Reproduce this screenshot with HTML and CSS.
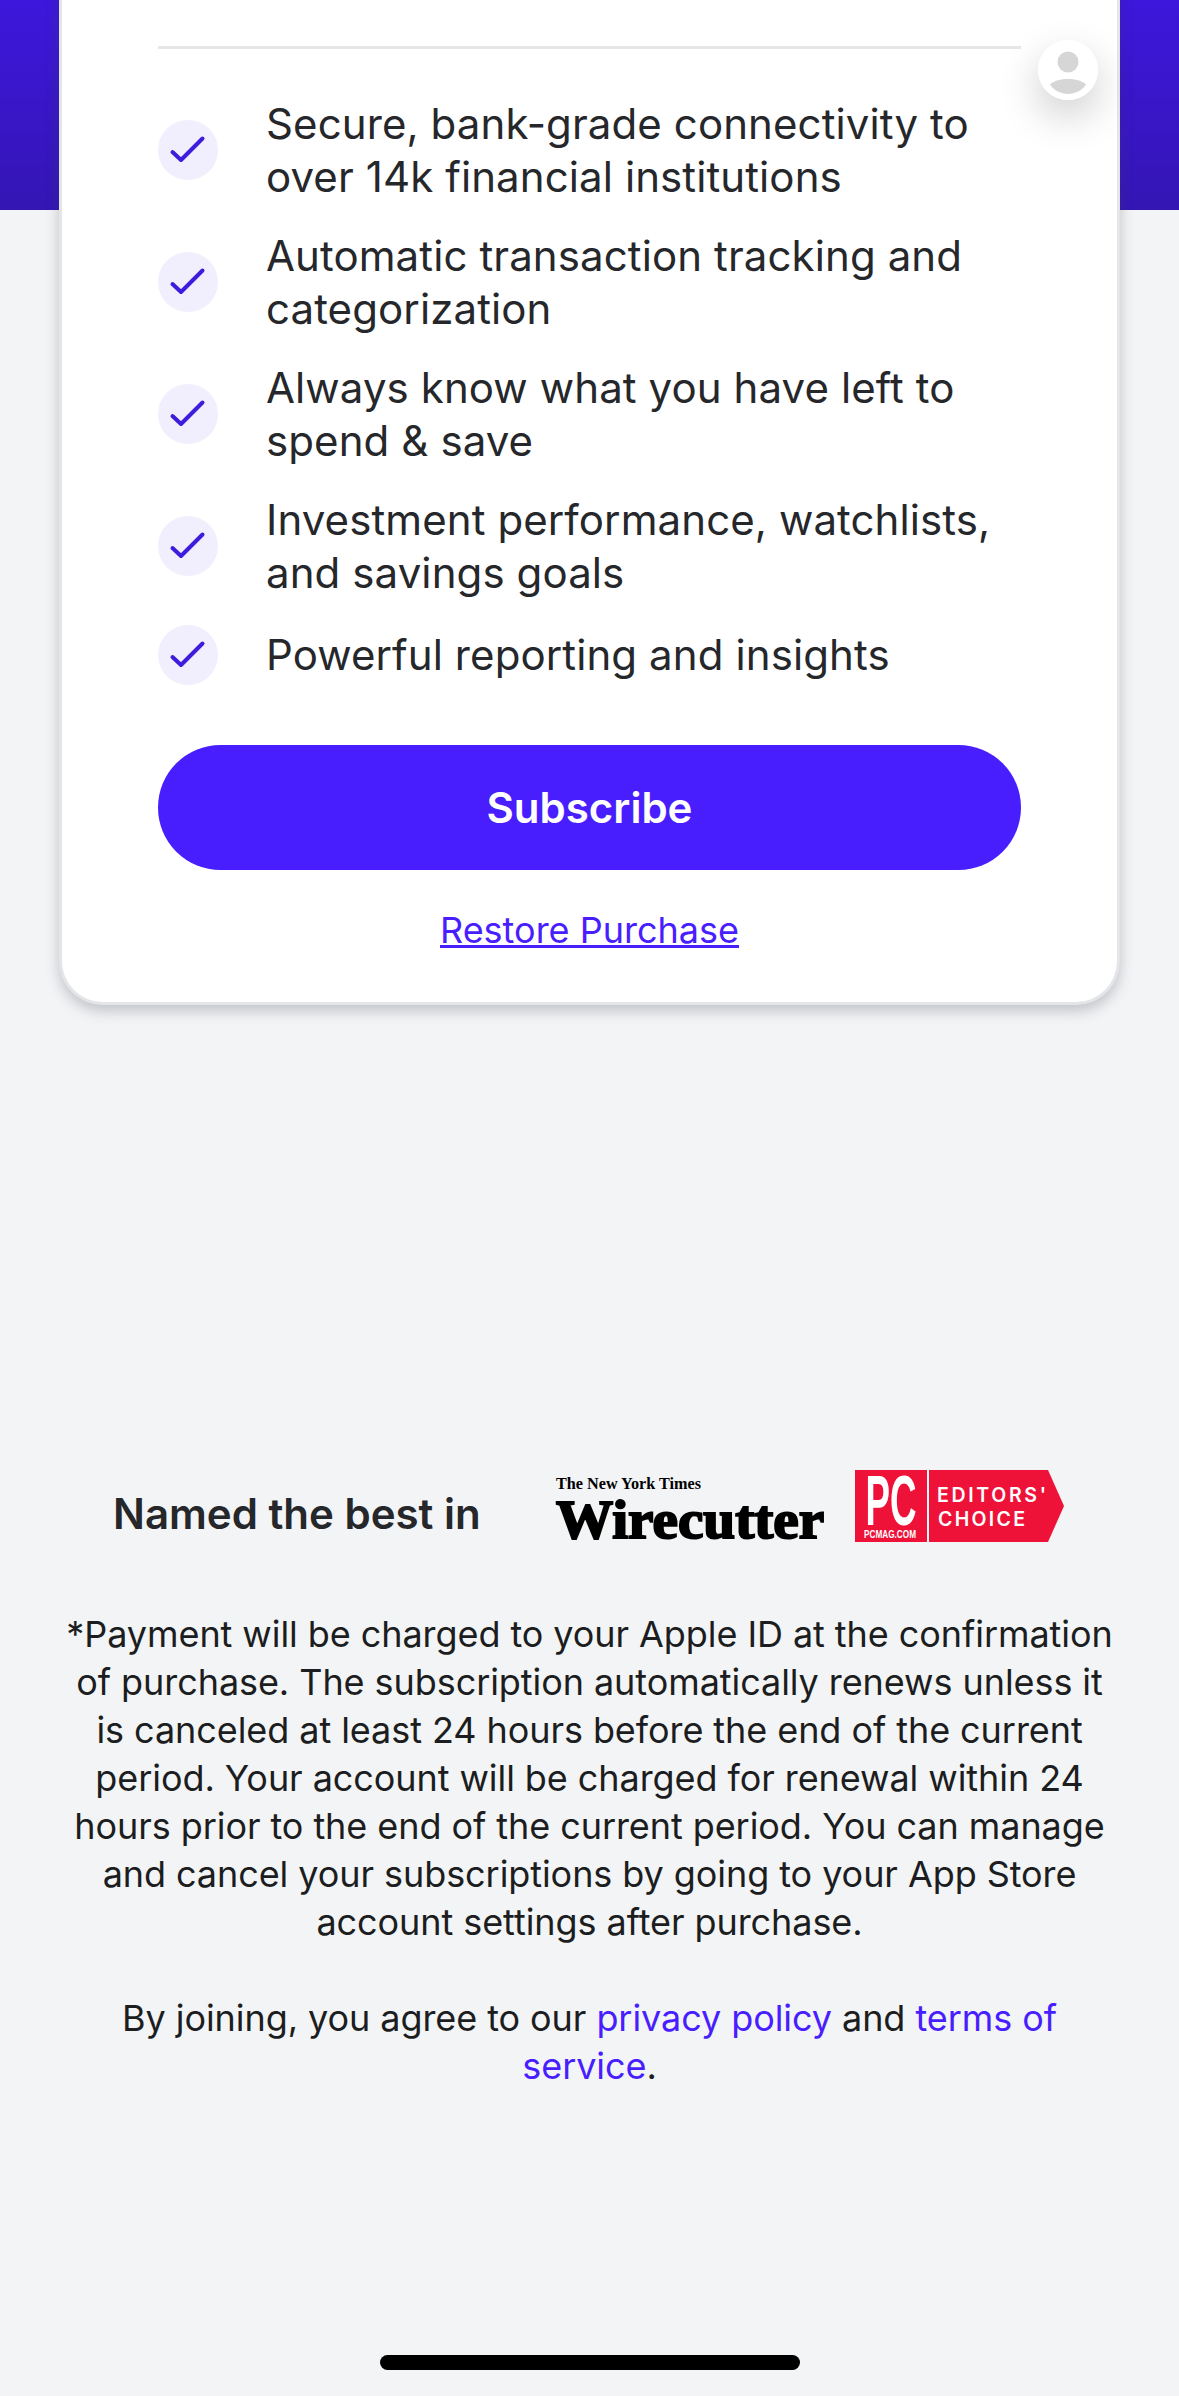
FILE: index.html
```html
<!DOCTYPE html>
<html lang="en">
<head>
	<meta charset="utf-8">
	<title>Subscribe</title>
	<link rel="stylesheet" href="styles.css">
</head>
<body>
	<div class="band"></div>

	<main class="card">
		<hr class="rule">
		<ul class="perks">
			<li><svg class="tick" viewBox="0 0 60 60"><circle cx="30" cy="30" r="30" fill="#f1effd"/><path d="M14.500 32L23 40 44.500 18.500" fill="none" stroke="#3f1bdc" stroke-width="4" stroke-linecap="round" stroke-linejoin="round"/></svg><span>Secure, bank-grade connectivity to over 14k financial institutions</span></li>
			<li><svg class="tick" viewBox="0 0 60 60"><circle cx="30" cy="30" r="30" fill="#f1effd"/><path d="M14.500 32L23 40 44.500 18.500" fill="none" stroke="#3f1bdc" stroke-width="4" stroke-linecap="round" stroke-linejoin="round"/></svg><span>Automatic transaction tracking and categorization</span></li>
			<li><svg class="tick" viewBox="0 0 60 60"><circle cx="30" cy="30" r="30" fill="#f1effd"/><path d="M14.500 32L23 40 44.500 18.500" fill="none" stroke="#3f1bdc" stroke-width="4" stroke-linecap="round" stroke-linejoin="round"/></svg><span>Always know what you have left to spend &amp; save</span></li>
			<li><svg class="tick" viewBox="0 0 60 60"><circle cx="30" cy="30" r="30" fill="#f1effd"/><path d="M14.500 32L23 40 44.500 18.500" fill="none" stroke="#3f1bdc" stroke-width="4" stroke-linecap="round" stroke-linejoin="round"/></svg><span>Investment performance, watchlists, and savings goals</span></li>
			<li><svg class="tick" viewBox="0 0 60 60"><circle cx="30" cy="30" r="30" fill="#f1effd"/><path d="M14.500 32L23 40 44.500 18.500" fill="none" stroke="#3f1bdc" stroke-width="4" stroke-linecap="round" stroke-linejoin="round"/></svg><span>Powerful reporting and insights</span></li>
		</ul>
		<button class="subscribe" type="button">Subscribe</button>
		<a class="restore" href="#">Restore Purchase</a>
	</main>

	<div class="avatar">
		<svg viewBox="0 0 60 60"><circle cx="30" cy="30" r="30" fill="#fff"/><circle cx="30" cy="22" r="10.500" fill="#d6d6d6"/><path d="M12 44.500C16 40.500 23 39 30 39s14 1.500 18 5.500C44 50.500 37 54 30 54S16 50.500 12 44.500z" fill="#d6d6d6"/></svg>
	</div>

	<section class="press">
		<h2>Named the best in</h2>
		<div class="wirecutter">
			<div class="nyt">The New York Times</div>
			<div class="wc">Wirecutter</div>
		</div>
		<svg class="pcmag" viewBox="0 0 209 72">
			<path d="M0 0H193L209 36 193 72H0z" fill="#ee1238"/>
			<rect x="72" y="0" width="2" height="72" fill="#f7f8fa"/>
			<text x="10.500" y="55" class="pc-big" textLength="51" lengthAdjust="spacingAndGlyphs">PC</text>
			<text x="9" y="67.500" class="pc-small" textLength="52" lengthAdjust="spacingAndGlyphs">PCMAG.COM</text>
			<text x="82" y="32" class="pc-label" textLength="109" lengthAdjust="spacing">EDITORS'</text>
			<text x="83" y="56" class="pc-label" textLength="87" lengthAdjust="spacing">CHOICE</text>
		</svg>
	</section>

	<section class="legal">
		<p>*Payment will be charged to your Apple ID at the confirmation of purchase. The subscription automatically renews unless it is canceled at least 24 hours before the end of the current period. Your account will be charged for renewal within 24 hours prior to the end of the current period. You can manage and cancel your subscriptions by going to your App Store account settings after purchase.</p>
		<p>By joining, you agree to our <a href="#">privacy policy</a> and <a href="#">terms of service</a>.</p>
	</section>

	<div class="home-bar"></div>
</body>
</html>
```

FILE: styles.css
```css
* { box-sizing:border-box; }

html, body { margin:0; padding:0; }

body {
	position:relative;
	width:1179px;
	height:2396px;
	overflow:hidden;
	background:#f3f4f6;
	font-family:Inter, "Noto Sans", sans-serif;
	color:#25272b;
}

.band {
	position:absolute;
	top:0;
	left:0;
	right:0;
	height:210px;
	background:linear-gradient(180deg, #3d17dc 0%, #3416b4 100%);
}

.card {
	position:relative;
	margin:-10px 59px 0;
	padding:56px 96px 0;
	height:1015px;
	background:#fff;
	border:3px solid #e4e5e8;
	border-top:0;
	border-radius:0 0 44px 44px;
	box-shadow:0 6px 14px rgba(60, 70, 80, 0.28);
}

.rule {
	margin:0;
	height:3px;
	border:0;
	background:#e6e6e8;
}

.perks {
	list-style:none;
	margin:0;
	padding:47.500px 0 0;
	display:flex;
	flex-direction:column;
	gap:25px;
}

.perks li {
	display:flex;
	align-items:center;
	gap:48px;
	font-size:42px;
	letter-spacing:0.100px;
	line-height:53.500px;
}

.tick {
	flex:none;
	width:60px;
	height:60px;
}

.subscribe {
	display:block;
	width:100%;
	height:125px;
	margin-top:60.500px;
	border:0;
	border-radius:63px;
	background:#481eff;
	color:#fff;
	font:600 42px Inter, sans-serif;
}

.restore {
	display:block;
	margin-top:38px;
	text-align:center;
	font-size:36px;
	color:#481eff;
}

.avatar {
	position:absolute;
	top:40px;
	left:1038px;
	width:60px;
	height:60px;
	border-radius:50%;
	box-shadow:0 16px 40px rgba(0, 0, 0, 0.2);
}

.avatar svg { display:block; }

.press {
	display:flex;
	align-items:center;
	margin-top:465px;
	padding-left:113px;
	height:72px;
}

.press h2 {
	margin:0;
	padding-top:14px;
	width:443px;
	font-size:42px;
	font-weight:600;
}

.wirecutter {
	width:299px;
	color:#000;
	font-family:"Liberation Serif", serif;
}

.nyt {
	font-size:16.200px;
	line-height:20px;
	font-weight:700;
}

.wc {
	margin-top:7px;
	font-size:54px;
	line-height:38px;
	font-weight:700;
	-webkit-text-stroke:2px #000;
	transform:scaleX(1.06);
	transform-origin:left center;
}

.pcmag {
	flex:none;
	width:209px;
	height:72px;
}

.pc-big { font:700 70px "Liberation Sans", sans-serif; fill:#fff; }
.pc-small { font:700 11.500px "Liberation Sans", sans-serif; fill:#fff; }
.pc-label { font:600 19.500px Inter, sans-serif; fill:#fff; }

.legal {
	margin-top:68px;
	padding:0 59px;
	text-align:center;
	font-size:36px;
	letter-spacing:-0.070px;
	line-height:48px;
	color:#1c1d20;
}

.legal p { margin:0 0 48px; }

.legal a {
	color:#481eff;
	text-decoration:none;
}

.home-bar {
	position:absolute;
	left:380px;
	top:2355px;
	width:420px;
	height:15px;
	border-radius:8px;
	background:#000;
}
```
